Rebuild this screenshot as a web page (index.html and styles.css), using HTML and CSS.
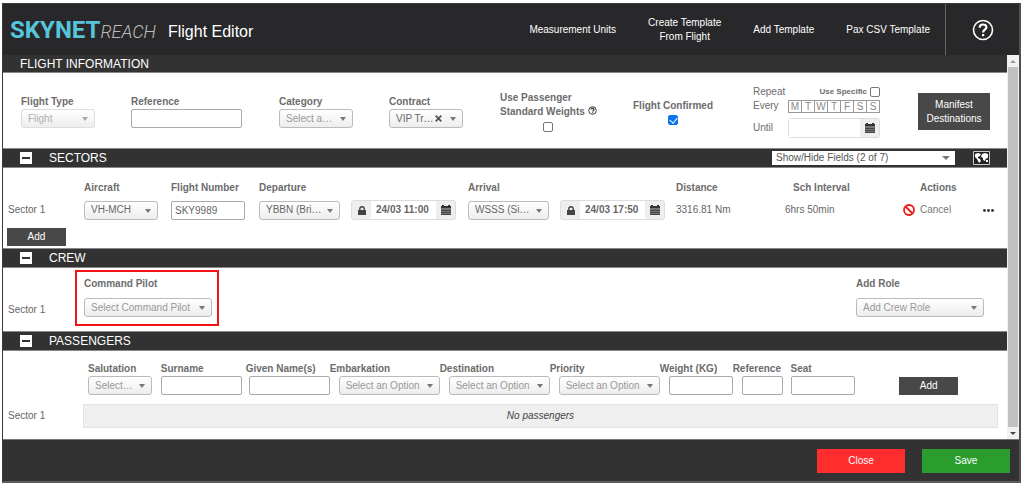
FILE: index.html
```html
<!DOCTYPE html>
<html lang="en">
<head>
<meta charset="utf-8">
<title>Flight Editor</title>
<link rel="stylesheet" href="styles.css">
</head>
<body>
<svg class="sprite" aria-hidden="true">
  <symbol id="calendar" viewBox="0 0 10 10"><path fill="#777" d="M0 3h10v7H0z"/><path fill="#333" d="M1 0h2v1h4V0h2v1h1v2H0V1h1z"/><path stroke="#444" d="M0 5.5h10M0 7.5h10M0 9.5h10"/></symbol>
  <symbol id="lock" viewBox="0 0 8 9"><path fill="#444" d="M0 4h8v5H0z"/><path fill="none" stroke="#444" stroke-width="1.4" d="M1.8 4.500V3a2.200 2.200 0 0 1 4.400 0v1.500"/></symbol>
</svg>
<main class="dialog">
  <header class="header">
    <div class="brand"><span class="brand-sky">SKYNET</span><span class="brand-reach">REACH</span></div>
    <h1 class="title">Flight Editor</h1>
    <nav class="menu">
      <a href="#">Measurement Units</a>
      <a href="#">Create Template<br>From Flight</a>
      <a href="#">Add Template</a>
      <a href="#">Pax CSV Template</a>
    </nav>
    <button class="help" aria-label="Help">
      <svg width="22" height="22" viewBox="0 0 22 22" fill="none" stroke="#fff"><circle cx="11" cy="11" r="9.500" stroke-width="1.600"/><path stroke-width="2.200" d="M7.600 8.600C7.700 4.500 14.400 4.500 14.400 8.300c0 2.500-3.300 2.400-3.300 5.200"/><path stroke-width="2.200" d="M11.100 15v2.200"/></svg>
    </button>
  </header>

  <div class="scroller">
    <div class="content">
      <section>
        <div class="bar bar-first"><h2>FLIGHT INFORMATION</h2></div>
        <div class="info">
          <div class="field">
            <label for="type">Flight Type</label>
            <span class="pick faded w74"><select id="type" disabled><option>Flight</option></select></span>
          </div>
          <div class="field">
            <label for="ref">Reference</label>
            <input class="text w111" id="ref" type="text">
          </div>
          <div class="field">
            <label for="cat">Category</label>
            <span class="pick empty w74"><select id="cat"><option>Select a…</option></select></span>
          </div>
          <div class="field">
            <label for="contract">Contract</label>
            <span class="pick w74"><select id="contract"><option>VIP Tr…</option></select><button class="clear" aria-label="Clear contract"><svg width="7" height="7" viewBox="0 0 7 7"><path stroke="#555" stroke-width="1.800" d="M.7.7l5.600 5.600M6.300.7L.7 6.300"/></svg></button></span>
          </div>
          <div class="weights">
            <label for="std">Use Passenger<br>Standard Weights</label>
            <svg class="hint" width="9" height="9" viewBox="0 0 9 9" fill="none" stroke="#444"><circle cx="4.500" cy="4.500" r="3.800"/><path stroke-width="1.300" d="M3 3.500c.2-1.800 3-1.600 3 .1 0 1-1.400 1-1.400 2M4.600 6.300v1"/></svg>
            <input class="check" id="std" type="checkbox">
          </div>
          <div class="confirmed">
            <label for="conf">Flight Confirmed</label>
            <input class="check" id="conf" type="checkbox" checked>
          </div>
          <div class="repeat">
            <span class="repeat-label">Repeat</span>
            <span class="specific"><label for="spec">Use Specific</label><input class="check" id="spec" type="checkbox"></span>
            <span class="repeat-label">Every</span>
            <span class="days"><button>M</button><button>T</button><button>W</button><button>T</button><button>F</button><button>S</button><button>S</button></span>
            <label class="repeat-label until" for="until">Until</label>
            <span class="date until"><input id="until" type="text"><button aria-label="Pick end date"><svg width="10" height="10"><use href="#calendar"/></svg></button></span>
          </div>
          <button class="dark manifest">Manifest<br>Destinations</button>
        </div>
      </section>

      <section>
        <div class="bar">
          <button class="toggle" aria-label="Collapse sectors"></button>
          <h2>SECTORS</h2>
          <span class="show-fields"><select aria-label="Show or hide fields"><option>Show/Hide Fields (2 of 7)</option></select></span>
          <button class="map" aria-label="Map"><svg width="17" height="14" viewBox="0 0 17 14"><path fill="#222" stroke="#ccc" d="M.5.5h16v13H.5z"/><path fill="#fff" d="M2 3l3-1 3 1-1 2-2 1 0 1 2 1 1 2-2 2-1-2-1-2-2-2zM9 3l3-1 3 1 0 3-1 2-1-1-1 3-2-1 0-2-2-1zM13 9l2 0 0 2-2 0z"/></svg></button>
        </div>
        <div class="sectors">
          <table>
            <colgroup><col class="c-name"><col class="c-air"><col class="c-num"><col class="c-dep"><col class="c-arr"><col class="c-dist"><col class="c-int"><col class="c-act"></colgroup>
            <thead>
              <tr><th></th><th>Aircraft</th><th>Flight Number</th><th>Departure</th><th>Arrival</th><th>Distance</th><th class="th-int">Sch Interval</th><th class="th-act">Actions</th></tr>
            </thead>
            <tbody>
              <tr>
                <td>Sector 1</td>
                <td><span class="pick w74"><select aria-label="Aircraft"><option>VH-MCH</option></select></span></td>
                <td><input class="text w74" type="text" value="SKY9989" aria-label="Flight number"></td>
                <td><div class="stop">
                  <span class="pick w81"><select aria-label="Departure"><option>YBBN (Bri…</option></select></span>
                  <span class="date"><button aria-label="Lock departure"><svg width="8" height="9"><use href="#lock"/></svg></button><input type="text" value="24/03 11:00" aria-label="Departure time"><button aria-label="Pick departure"><svg width="10" height="10"><use href="#calendar"/></svg></button></span>
                </div></td>
                <td><div class="stop">
                  <span class="pick w81"><select aria-label="Arrival"><option>WSSS (Si…</option></select></span>
                  <span class="date"><button aria-label="Lock arrival"><svg width="8" height="9"><use href="#lock"/></svg></button><input type="text" value="24/03 17:50" aria-label="Arrival time"><button aria-label="Pick arrival"><svg width="10" height="10"><use href="#calendar"/></svg></button></span>
                </div></td>
                <td>3316.81 Nm</td>
                <td>6hrs 50min</td>
                <td><div class="actions">
                  <button class="cancel"><svg width="12" height="12" viewBox="0 0 12 12" fill="none" stroke="#f01818" stroke-width="1.800"><circle cx="6" cy="6" r="5"/><path d="M2.500 2.500l7 7"/></svg>Cancel</button>
                  <button class="more" aria-label="More"><svg width="11" height="3" viewBox="0 0 11 3" fill="#333"><circle cx="1.500" cy="1.500" r="1.400"/><circle cx="5.500" cy="1.500" r="1.400"/><circle cx="9.500" cy="1.500" r="1.400"/></svg></button>
                </div></td>
              </tr>
            </tbody>
          </table>
          <button class="dark">Add</button>
        </div>
      </section>

      <section>
        <div class="bar"><button class="toggle" aria-label="Collapse crew"></button><h2>CREW</h2></div>
        <div class="crew">
          <span class="crew-name">Sector 1</span>
          <div class="crew-field marked">
            <label for="pilot">Command Pilot</label>
            <span class="pick empty"><select id="pilot"><option>Select Command Pilot</option></select></span>
          </div>
          <div class="crew-field role">
            <label for="role">Add Role</label>
            <span class="pick empty"><select id="role"><option>Add Crew Role</option></select></span>
          </div>
        </div>
      </section>

      <section>
        <div class="bar"><button class="toggle" aria-label="Collapse passengers"></button><h2>PASSENGERS</h2></div>
        <div class="pax">
          <div class="field"><label for="sal">Salutation</label><span class="pick empty w64"><select id="sal"><option>Select…</option></select></span></div>
          <div class="field"><label for="sur">Surname</label><input class="text w81" id="sur" type="text"></div>
          <div class="field given"><label for="giv">Given Name(s)</label><input class="text w81" id="giv" type="text"></div>
          <div class="field inset"><label for="emb">Embarkation</label><span class="pick empty w101"><select id="emb"><option>Select an Option</option></select></span></div>
          <div class="field inset"><label for="des">Destination</label><span class="pick empty w101"><select id="des"><option>Select an Option</option></select></span></div>
          <div class="field inset"><label for="pri">Priority</label><span class="pick empty w101"><select id="pri"><option>Select an Option</option></select></span></div>
          <div class="field inset"><label for="wei">Weight (KG)</label><input class="text w64" id="wei" type="text"></div>
          <div class="field inset"><label for="pref">Reference</label><input class="text w41" id="pref" type="text"></div>
          <div class="field"><label for="seat">Seat</label><input class="text w64" id="seat" type="text"></div>
          <button class="dark">Add</button>
        </div>
        <div class="pax-list"><span>Sector 1</span><p>No passengers</p></div>
      </section>
    </div>
    <div class="scrollbar" aria-hidden="true"><i class="up"></i><i class="thumb"></i><i class="down"></i></div>
  </div>

  <footer class="footer">
    <button class="close">Close</button>
    <button class="save">Save</button>
  </footer>
</main>
</body>
</html>
```
FILE: styles.css
```css
* { box-sizing: border-box; }

body {
  margin: 0;
  padding: 3px 3px 2px 2px;
  background: #fff;
  color: #666;
  font: 10px/14px "Liberation Sans", Arial, sans-serif;
}

button, input, select { font: inherit; color: inherit; margin: 0; }
button { padding: 0; border: 0; background: none; cursor: pointer; }
a { color: inherit; text-decoration: none; }
svg { display: block; }
.sprite { position: absolute; width: 0; height: 0; }

.dialog {
  border: 1px solid #3a3a3c;
  border-right: 2px solid #505050;
  border-bottom: 2px solid #5c5c5c;
}

/* Header */
.header {
  display: flex;
  align-items: center;
  height: 51px;
  background: #28282a;
  color: #fff;
}
.brand {
  display: flex;
  align-items: baseline;
  padding: 2px 0 0 7px;
  font-family: Roboto, sans-serif;
  line-height: 28px;
}
.brand-sky { color: #56c5dc; font-size: 24px; font-weight: 700; }
.brand-reach { color: #bbb; font-size: 18px; font-weight: 300; font-style: italic; }
.title { flex: 1; margin: 0; padding: 4px 0 0 12px; font-size: 16px; line-height: 20px; font-weight: 400; }
.menu { display: flex; align-items: center; gap: 32px; margin-right: 15px; text-align: center; }
.help {
  display: flex;
  align-items: center;
  justify-content: center;
  align-self: stretch;
  width: 74px;
  border-left: 1px solid #666;
}

/* Section bars */
.scroller { display: flex; }
.content { flex: 1; min-width: 0; background: #fff; }
.bar {
  display: flex;
  align-items: center;
  height: 20px;
  padding-left: 17px;
  border-top: 1px solid #888;
  border-bottom: 1px solid #888;
  background: #323232;
  color: #fff;
}
.bar h2 { flex: 1; margin: 0; font-size: 12px; line-height: 16px; font-weight: 400; }
.bar-first { height: 18px; border-top: 0; }
.toggle { width: 12px; height: 12px; margin-right: 17px; padding: 0 2px; background: #fff; }
.toggle::before { content: ""; display: block; height: 2px; background: #323232; }
.show-fields { position: relative; width: 183px; margin-right: 18px; }
.show-fields select {
  display: block;
  appearance: none;
  width: 100%;
  height: 14px;
  padding: 0 4px;
  border: 0;
  border-radius: 0;
  background: #fff;
  color: #555;
}
.map { margin-right: 17px; }

/* Controls */
label, th { color: #6c6c6c; font-weight: 700; }
.pick { position: relative; display: block; }
.pick select {
  display: block;
  appearance: none;
  width: 100%;
  height: 19px;
  padding: 0 0 0 6px;
  border: 1px solid #bbb;
  border-radius: 3px;
  background: linear-gradient(#fff, #ededed);
  color: #666;
  opacity: 1;
}
.pick::after, .show-fields::after {
  content: "";
  position: absolute;
  top: 8px;
  right: 7px;
  border: 3px solid transparent;
  border-top: 4px solid #777;
  border-bottom: 0;
  pointer-events: none;
}
.show-fields::after { top: 5px; right: 5px; border-width: 4px 4px 0; }
.empty select { color: #999; }
.faded select { border-color: #ddd; color: #b0b0b0; }
.faded::after { border-top-color: #aaa; }
.clear { position: absolute; top: 6px; right: 21px; }
.text {
  display: block;
  height: 19px;
  padding: 0 3px;
  border: 1px solid #aaa;
  border-radius: 2px;
  background: #fff;
  outline: 0;
}
.w41 { width: 41px; }
.w64 { width: 64px; }
.w74 { width: 74px; }
.w81 { width: 81px; }
.w101 { width: 101px; }
.w111 { width: 111px; }
.field label { display: block; line-height: 14px; white-space: nowrap; }
.dark { height: 18px; width: 59px; background: #484848; color: #fff; }
.check {
  position: relative;
  appearance: none;
  display: block;
  width: 10px;
  height: 10px;
  border: 1px solid #777;
  border-radius: 2px;
  background: #fff;
}
.check:checked { border-color: #0b74ee; background: #0b74ee; }
.check:checked::after {
  content: "";
  position: absolute;
  top: 0;
  left: 2px;
  width: 4px;
  height: 6px;
  border: solid #fff;
  border-width: 0 1px 1px 0;
  transform: rotate(40deg);
}
.date {
  display: flex;
  height: 20px;
  border: 1px solid #ddd;
  border-radius: 3px;
  background: #eee;
}
.date input {
  flex: 1;
  min-width: 0;
  padding: 0 5px;
  border: 0;
  background: #fff;
  font-weight: 700;
  outline: 0;
}
.date button { display: flex; align-items: center; justify-content: center; width: 19px; }

/* Flight information */
.info {
  display: grid;
  grid-template-columns: 110fr 148fr 110fr 111fr 133fr 120fr 165fr 72fr;
  align-items: center;
  min-height: 75px;
  padding: 2px 17px 0 18px;
}
.weights { display: grid; grid-template-columns: auto auto 1fr; gap: 0 3px; }
.weights .hint { align-self: end; margin-bottom: 4px; }
.weights .check { grid-column: 1; margin: 3px 0 0 43px; }
.confirmed { display: grid; gap: 2px; justify-content: start; justify-items: center; }
.repeat {
  display: grid;
  grid-template-columns: 35px 92px;
  align-items: center;
  row-gap: 0;
}
.repeat-label { color: #6c6c6c; font-weight: 400; }
.specific { display: flex; align-items: center; justify-content: flex-end; gap: 3px; }
.specific label { font-size: 8px; }
.days { display: flex; border: 1px solid #999; border-right: 0; }
.days button { flex: 1; height: 11px; border-right: 1px solid #999; line-height: 11px; color: #888; }
.until { margin-top: 5px; }
.manifest { width: 72px; height: 37px; }

/* Sectors */
.sectors { min-height: 80px; padding: 12px 0 1px 4px; }
table { width: 100%; table-layout: fixed; border-collapse: collapse; }
th { height: 16px; padding: 0; text-align: left; white-space: nowrap; }
td { height: 28px; padding: 0; }
td:first-child { padding-left: 1px; }
.c-name { width: 77px; }
.c-air { width: 87px; }
.c-num { width: 88px; }
.c-dep { width: 209px; }
.c-arr { width: 208px; }
.c-dist { width: 109px; }
.c-int { width: 118px; }
.c-act { width: 104px; }
.th-int { padding-left: 8px; }
.th-act { padding-left: 17px; }
.stop { display: flex; align-items: center; gap: 11px; }
.stop .date { width: 105px; }
.actions { display: flex; align-items: center; gap: 32px; }
.cancel { display: flex; align-items: center; gap: 5px; color: #777; }
.sectors > .dark { display: block; margin-top: 4px; }

/* Crew */
.crew { display: flex; min-height: 63px; padding: 2px 23px 0 5px; }
.crew-name { width: 67px; padding-top: 33px; }
.crew-field { display: flex; flex-direction: column; gap: 7px; height: 56px; padding: 7px 0; }
.crew-field .pick { width: 128px; }
.marked { padding: 5px; padding-left: 7px; border: 2px solid #f01414; }
.role { margin-left: auto; }

/* Passengers */
.pax {
  display: grid;
  grid-template-columns: 73fr 85fr 83fr 110fr 110fr 110fr 73fr 58fr 109fr 108fr;
  align-items: end;
  padding: 11px 0 0 85px;
}
.given .text { margin-left: 3px; }
.inset .text, .inset .pick { margin-left: 9px; }
.pax-list { display: flex; align-items: center; padding: 9px 9px 11px 5px; }
.pax-list span { width: 75px; }
.pax-list p {
  flex: 1;
  margin: 0;
  padding: 4px;
  border: 1px solid #e2e2e2;
  background: #efefef;
  color: #444;
  font-style: italic;
  text-align: center;
}

/* Scrollbar */
.scrollbar { display: flex; flex-direction: column; align-items: center; width: 12px; background: #f1f1f1; }
.up, .down { margin: 5px 0 4px; border: 3px solid transparent; }
.up { border-bottom-color: #999; border-top: 0; }
.down { border-top-color: #444; border-bottom: 0; }
.thumb { flex: 1; width: 10px; background: #c1c1c1; }

/* Footer */
.footer {
  display: flex;
  justify-content: flex-end;
  align-items: center;
  gap: 17px;
  height: 42px;
  padding: 0 9px 0 0;
  border-top: 1px solid #777;
  background: #323232;
}
.footer button { width: 88px; height: 24px; color: #fff; }
.close { background: #ff2d2d; }
.save { background: #2a9d2c; }
```
